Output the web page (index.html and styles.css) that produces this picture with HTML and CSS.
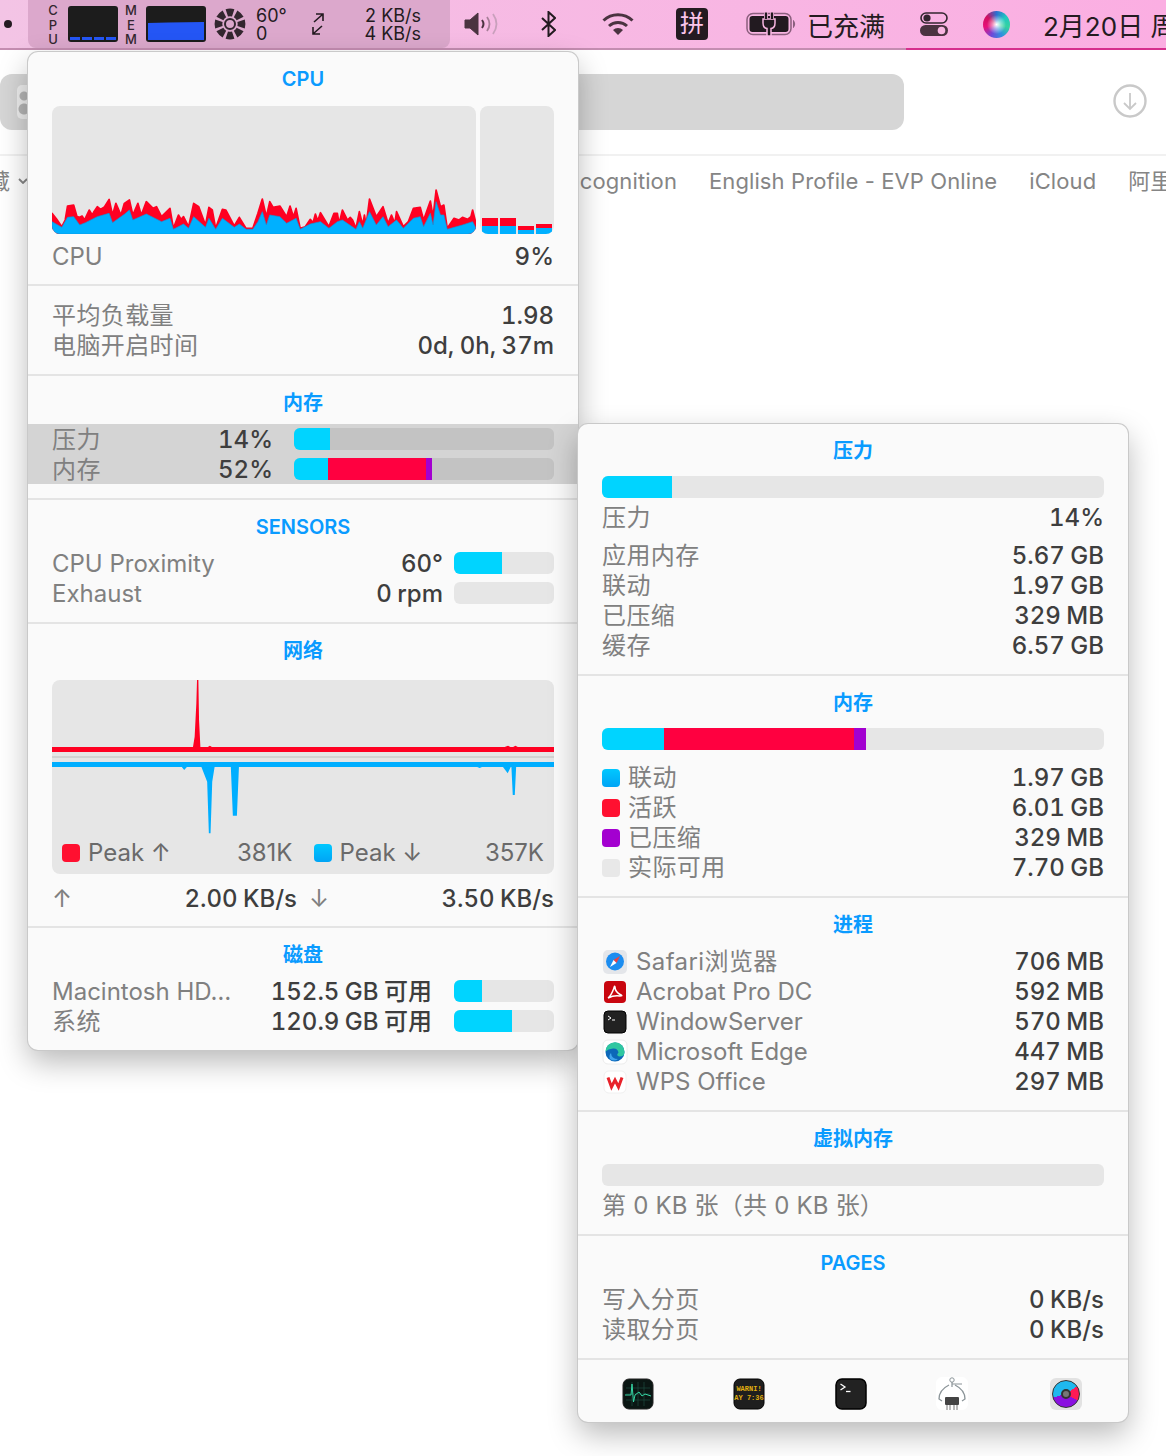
FILE: index.html
```html
<!DOCTYPE html>
<html lang="en">
<head>
    <meta charset="UTF-8">
    <meta name="viewport" content="width=device-width, initial-scale=1.0">
    <title>Stats menu</title>
    <link rel="stylesheet" href="styles.css">
</head>
<body>
    <!-- menu bar -->
    <header class="menubar">
        <span class="dot"></span>
        <div class="stats">
            <div class="letters">CPU</div>
            <div class="mini mini-cpu"><i></i><i></i><i></i><i></i></div>
            <div class="letters letters-mem">MEM</div>
            <div class="mini mini-mem">
                <svg width="56" height="18" viewBox="0 0 56 18"><polygon points="0,1 20,0.500 56,0 56,18 0,18" fill="#2456f5"/></svg>
            </div>
            <svg class="fan" width="32" height="32" viewBox="0 0 32 32">
                <defs><path id="blade" d="M14 8.600 L11.600 1.200 Q16 0 20.400 1.200 L18 8.600 Q16 8 14 8.600z" fill="#33262f"/></defs>
                <use href="#blade"/>
                <use href="#blade" transform="rotate(45 16 16)"/>
                <use href="#blade" transform="rotate(90 16 16)"/>
                <use href="#blade" transform="rotate(135 16 16)"/>
                <use href="#blade" transform="rotate(180 16 16)"/>
                <use href="#blade" transform="rotate(225 16 16)"/>
                <use href="#blade" transform="rotate(270 16 16)"/>
                <use href="#blade" transform="rotate(315 16 16)"/>
                <circle cx="16" cy="16" r="5" fill="none" stroke="#33262f" stroke-width="2"/>
            </svg>
            <div class="two-line temps"><span>60°</span><span>0</span></div>
            <svg class="net-arrows" width="12" height="22" viewBox="0 0 12 22" fill="none" stroke="#231a20" stroke-width="1.600">
                <path d="M2 9 L10.500 1.500 M4 1 H11 V8"/>
                <path d="M10 13 L1.500 20.500 M8 21 H1 V14"/>
            </svg>
            <div class="two-line speeds"><span>2 KB/s</span><span>4 KB/s</span></div>
        </div>
        <svg class="m-speaker" width="36" height="24" viewBox="0 0 36 24" fill="none">
            <path d="M1 8 H6 L14 1 V23 L6 16 H1z" fill="#4a3340" stroke="#4a3340" stroke-linejoin="round"/>
            <path d="M18 8 Q21 12 18 16" stroke="#4a3340" stroke-width="2"/>
            <path d="M23 5 Q28 12 23 19" stroke="#a77f98" stroke-width="1.800"/>
            <path d="M29 2 Q36 12 29 22" stroke="#c9a0bc" stroke-width="1.800"/>
        </svg>
        <svg class="m-bt" width="15" height="26" viewBox="0 0 15 26" fill="none" stroke="#231a20" stroke-width="2">
            <polyline points="1,7 14,19 7.500,25 7.500,1 14,7 1,19"/>
        </svg>
        <svg class="m-wifi" width="32" height="24" viewBox="0 0 32 24" fill="none" stroke="#4a3340" stroke-width="3">
            <path d="M1.500 8.500 A21 21 0 0 1 30.500 8.500"/>
            <path d="M7 14 A13.500 13.500 0 0 1 25 14"/>
            <path d="M11 18 A7 7 0 0 1 21 18 L16 23z" fill="#4a3340" stroke="none"/>
        </svg>
        <span class="m-pin">拼</span>
        <svg class="m-batt" width="51" height="24" viewBox="0 0 51 24" fill="none">
            <rect x="1" y="1.500" width="44" height="21" rx="6" stroke="#8b5f7e" stroke-width="1.500"/>
            <path d="M47.500 8.500 Q50 12 47.500 15.500z" fill="#8b5f7e" stroke="#8b5f7e"/>
            <rect x="3.500" y="4" width="39" height="16" rx="3" fill="#221a20"/>
            <path d="M17 7 H29 V11 Q29 16 25 16.500 V24 H21 V16.500 Q17 16 17 11z" fill="#221a20" stroke="#f8b6e1" stroke-width="1.500"/>
            <path d="M20 0 V7 M26 0 V7" stroke="#f8b6e1" stroke-width="4"/>
            <path d="M20 0.500 V7 M26 0.500 V7" stroke="#221a20" stroke-width="2.400"/>
        </svg>
        <span class="m-text">已充满</span>
        <svg class="m-cc" width="28" height="24" viewBox="0 0 28 24">
            <rect x="1" y="1" width="26" height="10" rx="5" fill="none" stroke="#33262f" stroke-width="1.600"/>
            <circle cx="7" cy="6" r="3.600" fill="#33262f"/>
            <rect x="0" y="13" width="28" height="11" rx="5.500" fill="#4a3340"/>
            <circle cx="21.500" cy="18.500" r="3.800" fill="#f8b6e1"/>
        </svg>
        <span class="m-siri"></span>
        <span class="m-date">2月20日 周</span>
    </header>

    <!-- browser behind the popups -->
    <div class="toolbar">
        <div class="address">
            <span class="addr-icon"></span>
        </div>
        <svg class="download" width="34" height="34" viewBox="0 0 34 34" fill="none" stroke="#c9c9c9" stroke-width="2.400">
            <circle cx="17" cy="17" r="15.500"/>
            <path d="M17 9 V25 M11 19 L17 25 L23 19" stroke-width="1.800"/>
        </svg>
    </div>
    <nav class="bookmarks">
        <span class="bm-first">
            <span>收藏</span>
            <svg width="10" height="6" viewBox="0 0 10 6" fill="none" stroke="#858585" stroke-width="1.800"><path d="M1 1 L5 5 L9 1"/></svg>
        </span>
        <span class="bm-hidden">Speech Recognition</span>
        <span>English Profile - EVP Online</span>
        <span>iCloud</span>
        <span>阿里云</span>
    </nav>

    <!-- left popup -->
    <div class="panel panel-left">
        <section class="section">
            <h3>CPU</h3>
            <div class="cpu-charts">
                <div class="chart cpu-history">
                    <svg width="424" height="128" viewBox="36 18 1254 384" preserveAspectRatio="none">
                        <polygon fill="#ff0022" stroke="#ff0022" stroke-width="5" stroke-linejoin="round" points="36,402 36,340 50,358 65,380 75,360 82,318 100,315 110,350 118,352 125,348 132,360 146,330 155,345 160,335 170,320 180,328 190,322 205,298 215,345 225,310 240,345 250,310 265,300 275,345 290,310 300,345 315,305 335,325 345,320 360,350 385,325 395,385 410,345 418,358 425,350 440,380 455,310 470,320 490,375 500,322 510,330 520,385 540,328 550,330 575,378 590,352 610,385 630,385 645,340 658,297 670,350 680,305 690,322 710,318 730,350 740,318 750,350 758,325 770,385 785,380 800,358 808,368 815,342 822,362 830,338 855,380 870,340 880,340 885,370 895,330 910,360 918,352 925,360 935,385 945,335 955,375 960,345 965,375 975,297 995,350 1015,320 1030,370 1040,345 1050,370 1055,335 1075,380 1090,365 1105,325 1125,322 1135,360 1155,303 1163,350 1172,270 1185,320 1195,315 1205,385 1225,355 1240,360 1250,352 1265,358 1275,350 1280,330 1290,370 1290,402"/>
                        <polygon fill="#00b0ff" stroke="#0c98e0" stroke-width="2" points="36,402 36,365 65,382 82,352 100,350 118,375 135,368 170,350 205,340 215,368 250,343 265,330 275,360 315,342 360,365 385,355 395,388 425,372 440,385 455,350 490,382 500,355 520,388 540,355 575,382 590,372 610,388 630,388 645,365 658,335 670,375 680,345 710,350 730,370 758,355 770,388 800,372 830,365 855,385 880,365 895,360 935,388 945,365 955,385 975,335 995,375 1015,350 1030,380 1055,360 1075,385 1105,355 1125,350 1135,380 1155,340 1163,375 1172,305 1185,345 1195,345 1205,388 1250,375 1280,365 1290,385 1290,402"/>
                    </svg>
                </div>
                <div class="chart cpu-cores">
                    <div class="core"><i class="seg-red core-h8"></i><i class="seg-blue core-h8"></i></div>
                    <div class="core"><i class="seg-red core-h8"></i><i class="seg-blue core-h8"></i></div>
                    <div class="core"><i class="seg-red core-h4"></i><i class="seg-blue core-h4"></i></div>
                    <div class="core"><i class="seg-red core-h4"></i><i class="seg-blue core-h6"></i></div>
                </div>
            </div>
            <div class="row row-after-chart"><span class="label">CPU</span><span class="value">9%</span></div>
        </section>

        <section class="section section-plain section-roomy">
            <div class="row"><span class="label zh">平均负载量</span><span class="value">1.98</span></div>
            <div class="row"><span class="label zh">电脑开启时间</span><span class="value">0d, 0h, 37m</span></div>
        </section>

        <section class="section section-roomy">
            <h3>内存</h3>
            <div class="highlight">
                <div class="row">
                    <span class="label zh">压力</span><span class="value">14%</span>
                    <div class="bar bar-wide"><i class="fill-cyan" style="width:36px"></i></div>
                </div>
                <div class="row">
                    <span class="label zh">内存</span><span class="value">52%</span>
                    <div class="bar bar-wide"><i class="fill-cyan" style="width:34px"></i><i class="fill-red" style="width:98px"></i><i class="fill-purple" style="width:6px"></i></div>
                </div>
            </div>
        </section>

        <section class="section section-roomy">
            <h3>SENSORS</h3>
            <div class="row">
                <span class="label">CPU Proximity</span><span class="value">60°</span>
                <div class="bar bar-small"><i class="fill-cyan" style="width:48px"></i></div>
            </div>
            <div class="row">
                <span class="label">Exhaust</span><span class="value">0 rpm</span>
                <div class="bar bar-small"></div>
            </div>
        </section>

        <section class="section">
            <h3 class="title-chart">网络</h3>
            <div class="chart net-chart">
                <svg width="502" height="194" viewBox="36 30 1485 582" preserveAspectRatio="none">
                    <rect x="36" y="258" width="1485" height="6" fill="#d2d2d2"/>
                    <polygon fill="#ff0022" points="36,231 453,231 458,200 463,100 465,30 469,30 471,150 475,231 497,231 503,227 509,231 1375,231 1385,227 1392,231 1400,231 1407,227 1414,231 1521,231 1521,246 36,246"/>
                    <polygon fill="#00aeff" points="36,276 1521,276 1521,291 1409,291 1405,375 1399,375 1395,291 1393,291 1384,310 1370,291 1308,291 1301,294 1294,291 589,291 583,437 571,437 565,291 517,291 510,335 505,490 500,490 495,335 478,291 435,291 427,300 420,291 36,291"/>
                </svg>
                <div class="net-legend">
                    <div class="legend-half"><i class="swatch swatch-red"></i><span class="legend-name">Peak ↑</span><span>381K</span></div>
                    <div class="legend-half"><i class="swatch swatch-blue"></i><span class="legend-name">Peak ↓</span><span>357K</span></div>
                </div>
            </div>
            <div class="net-speed">
                <div class="speed-half"><span class="label">↑</span><span class="value">2.00 KB/s</span></div>
                <div class="speed-half"><span class="label">↓</span><span class="value">3.50 KB/s</span></div>
            </div>
        </section>

        <section class="section">
            <h3>磁盘</h3>
            <div class="row">
                <span class="label">Macintosh HD…</span><span class="value">152.5 GB 可用</span>
                <div class="bar bar-small bar-disk"><i class="fill-cyan" style="width:28px"></i></div>
            </div>
            <div class="row">
                <span class="label zh">系统</span><span class="value">120.9 GB 可用</span>
                <div class="bar bar-small bar-disk"><i class="fill-cyan" style="width:58px"></i></div>
            </div>
        </section>
    </div>

    <!-- right popup -->
    <div class="panel panel-right">
        <section class="section">
            <h3>压力</h3>
            <div class="bar bar-full"><i class="fill-cyan" style="width:70px"></i></div>
            <div class="row row-after-bar"><span class="label zh">压力</span><span class="value">14%</span></div>
            <div class="group-gap">
                <div class="row"><span class="label zh">应用内存</span><span class="value">5.67 GB</span></div>
                <div class="row"><span class="label zh">联动</span><span class="value">1.97 GB</span></div>
                <div class="row"><span class="label zh">已压缩</span><span class="value">329 MB</span></div>
                <div class="row"><span class="label zh">缓存</span><span class="value">6.57 GB</span></div>
            </div>
        </section>

        <section class="section">
            <h3>内存</h3>
            <div class="bar bar-full"><i class="fill-cyan" style="width:62px"></i><i class="fill-red" style="width:190px"></i><i class="fill-purple" style="width:12px"></i></div>
            <div class="legend-rows">
                <div class="row"><i class="swatch swatch-blue"></i><span class="label zh">联动</span><span class="value">1.97 GB</span></div>
                <div class="row"><i class="swatch swatch-red"></i><span class="label zh">活跃</span><span class="value">6.01 GB</span></div>
                <div class="row"><i class="swatch swatch-purple"></i><span class="label zh">已压缩</span><span class="value">329 MB</span></div>
                <div class="row"><i class="swatch swatch-grey"></i><span class="label zh">实际可用</span><span class="value">7.70 GB</span></div>
            </div>
        </section>

        <section class="section">
            <h3>进程</h3>
            <div class="proc-rows">
                <div class="row">
                    <svg class="proc-icon" width="26" height="26" viewBox="0 0 26 26">
                        <rect x="1" y="1" width="24" height="24" rx="5" fill="#e4e6ea"/>
                        <circle cx="13" cy="12.500" r="9" fill="#1c8df0"/>
                        <polygon points="18,7 14.500,14 11.500,11" fill="#f04040"/>
                        <polygon points="8,18 14.500,14 11.500,11" fill="#fff"/>
                    </svg>
                    <span class="label zh">Safari浏览器</span><span class="value">706 MB</span>
                </div>
                <div class="row">
                    <svg class="proc-icon" width="26" height="26" viewBox="0 0 26 26">
                        <rect x="2" y="2" width="22" height="22" rx="4" fill="#c9060f"/>
                        <path d="M6 19 Q9 17 12 9 Q12.500 6 13 8 Q13 13 19 16 Q21 17 18 17 Q12 16 6 19z" fill="none" stroke="#fff" stroke-width="1.500"/>
                    </svg>
                    <span class="label">Acrobat Pro DC</span><span class="value">592 MB</span>
                </div>
                <div class="row">
                    <svg class="proc-icon" width="26" height="26" viewBox="0 0 26 26">
                        <rect x="2" y="2" width="22" height="22" rx="4" fill="#222" stroke="#000"/>
                        <path d="M6 7 L9 9 L6 11" fill="none" stroke="#fff" stroke-width="1"/>
                        <path d="M10 11 H13" stroke="#fff"/>
                    </svg>
                    <span class="label">WindowServer</span><span class="value">570 MB</span>
                </div>
                <div class="row">
                    <svg class="proc-icon" width="26" height="26" viewBox="0 0 26 26">
                        <rect x="1" y="1" width="24" height="24" rx="5" fill="#fff" stroke="#ececec"/>
                        <circle cx="13" cy="13" r="9.500" fill="#0c67b8"/>
                        <path d="M3.500 12.500 A9.500 9.500 0 0 1 22.500 13 Q22.500 17.500 17.500 17.500 Q13.500 16.500 16.500 13.500 Q15.500 9 11 9.500 Q6 10 3.500 12.500z" fill="#2fc7a0"/>
                        <path d="M9 14 Q9.500 20 16 20 Q12 23 8 20 Q6.500 16.500 9 14z" fill="#41a5ee"/>
                    </svg>
                    <span class="label">Microsoft Edge</span><span class="value">447 MB</span>
                </div>
                <div class="row">
                    <svg class="proc-icon" width="26" height="26" viewBox="0 0 26 26">
                        <rect x="2" y="2" width="22" height="22" rx="5" fill="#fff" stroke="#f0f0f0"/>
                        <polyline points="6,8.500 9.500,18 13,11 16.500,18 20,8.500" fill="none" stroke="#e8222a" stroke-width="3"/>
                    </svg>
                    <span class="label">WPS Office</span><span class="value">297 MB</span>
                </div>
            </div>
        </section>

        <section class="section">
            <h3>虚拟内存</h3>
            <div class="bar bar-full"></div>
            <div class="row row-after-bar"><span class="label label-spaced">第 0 KB 张（共 0 KB 张）</span></div>
        </section>

        <section class="section">
            <h3>PAGES</h3>
            <div class="proc-rows">
                <div class="row"><span class="label zh">写入分页</span><span class="value">0 KB/s</span></div>
                <div class="row"><span class="label zh">读取分页</span><span class="value">0 KB/s</span></div>
            </div>
        </section>

        <footer class="panel-foot">
            <svg class="foot-icon" width="32" height="32" viewBox="0 0 32 32">
                <rect x="1" y="1" width="30" height="30" rx="6" fill="#0a1613" stroke="#222"/>
                <path d="M4 10 H28 M4 16 H28 M4 22 H28 M10 4 V28 M16 4 V28 M22 4 V28" stroke="#1c4a40" stroke-width="0.700"/>
                <polyline points="3,17 9,17 10,6 11.500,24 13,17 17,14 20,18 23,16 29,18" fill="none" stroke="#35d6a4" stroke-width="1"/>
            </svg>
            <svg class="foot-icon" width="32" height="32" viewBox="0 0 32 32">
                <rect x="1" y="1" width="30" height="30" rx="6" fill="#1e1e1e" stroke="#000"/>
                <text x="16" y="13" class="console-text">WARNI!</text>
                <text x="16" y="22" class="console-text">AY 7:36</text>
            </svg>
            <svg class="foot-icon" width="32" height="32" viewBox="0 0 32 32">
                <rect x="1" y="1" width="30" height="30" rx="6" fill="#222" stroke="#000" stroke-width="1.500"/>
                <path d="M5.500 6 L10 9 L5.500 12" fill="none" stroke="#fff" stroke-width="1.300"/>
                <path d="M11 13.500 H15.500" stroke="#fff" stroke-width="1.300"/>
            </svg>
            <svg class="foot-icon" width="32" height="34" viewBox="0 0 32 34" fill="none">
                <rect width="32" height="33" rx="6" fill="#fff"/>
                <circle cx="16" cy="3" r="2.200" stroke="#8b9498"/>
                <path d="M16 5 V10 M16 7 H26" stroke="#8b9498" stroke-width="1.200"/>
                <path d="M13 8 Q3 13 3 22 L6 24 M19 8 Q29 13 29 22 L26 24" stroke="#8b9498" stroke-width="1.300"/>
                <rect x="9" y="20" width="14" height="8" rx="1" fill="#444"/>
                <path d="M11 28 V33 M14 28 V33 M18 28 V33 M21 28 V33" stroke="#777"/>
            </svg>
            <span class="gauge-tile"><span class="gauge"><i></i></span></span>
        </footer>
    </div>
</body>
</html>
```
FILE: styles.css
```css
* { box-sizing: border-box; }
body {
    margin: 0;
    height: 1456px;
    position: relative;
    overflow: hidden;
    background: #fff;
    font-family: Inter, "Noto Sans CJK SC", sans-serif;
}

/* menu bar */
.menubar {
    height: 50px;
    display: flex;
    align-items: center;
    overflow: hidden;
    white-space: nowrap;
    color: #241b21;
    background: linear-gradient(to right, #f3c4e5, #fbaee2);
    border-bottom: 2px solid;
    border-image: linear-gradient(to right, #c48db1 905px, #d62f8d 905px) 1;
}
.dot { width: 8px; height: 8px; margin-left: 4px; border-radius: 50%; background: #241b21; flex: none; }
.stats {
    width: 422px;
    height: 48px;
    margin-left: 16px;
    padding: 0 29px 0 20px;
    flex: none;
    display: flex;
    align-items: center;
    background: #dca8cc;
    border-radius: 0 0 8px 8px;
}
.letters {
    width: 10px;
    writing-mode: vertical-rl;
    text-orientation: upright;
    font-size: 13px;
    font-weight: 500;
    line-height: 10px;
    letter-spacing: -1.500px;
    color: #33262f;
}
.letters-mem { margin-left: 8px; }
.mini { height: 36px; background: #1c1c1c; border-radius: 3px; margin-left: 10px; display: flex; align-items: flex-end; padding: 2px; }
.mini-cpu { width: 50px; gap: 2px; }
.mini-cpu i { flex: 1; height: 3px; background: #2456f5; }
.mini-mem { width: 60px; }
.mini-mem svg { display: block; }
.fan { margin-left: 8px; flex: none; }
.two-line { display: flex; flex-direction: column; padding-top: 2px; font-size: 18px; line-height: 18px; }
.temps { margin-left: 10px; width: 40px; }
.net-arrows { margin-left: 16px; flex: none; }
.speeds { margin-left: auto; align-items: flex-end; }
.m-speaker { margin-left: 14px; flex: none; }
.m-bt { margin-left: 41px; flex: none; }
.m-wifi { margin-left: 46px; flex: none; }
.m-pin {
    width: 32px;
    height: 32px;
    margin-left: 42px;
    flex: none;
    background: #241b21;
    color: #fbc5ea;
    border-radius: 4px;
    font-size: 24px;
    line-height: 31px;
    text-align: center;
}
.m-batt { margin-left: 38px; flex: none; }
.m-text { margin-left: 10px; font-size: 26px; flex: none; }
.m-cc { margin-left: 35px; flex: none; }
.m-siri {
    width: 27px;
    height: 27px;
    margin-left: 35px;
    flex: none;
    border-radius: 50%;
    background: radial-gradient(circle at 50% 50%, #fff 0, rgba(255,255,255,.5) 22%, transparent 50%),
        conic-gradient(#2d6fd0, #20c8c0, #35d2a0, #2f8fe0, #7048d8, #e8107a, #d01060, #2d6fd0);
}
.m-date { margin-left: 33px; font-size: 26px; flex: none; }

/* browser window behind */
.toolbar {
    height: 106px;
    display: flex;
    align-items: flex-start;
    padding-top: 24px;
    border-bottom: 2px solid #f1f1f1;
}
.address {
    width: 904px;
    height: 56px;
    padding: 11px 0 0 17px;
    background: #d6d6d6;
    border-radius: 12px;
}
.addr-icon {
    display: block;
    width: 30px;
    height: 34px;
    border-radius: 5px;
    background: radial-gradient(circle at 7px 11px, #b5b5b5 4px, transparent 5px),
        radial-gradient(circle at 7px 24px, #b5b5b5 5px, transparent 6px),
        #ededed;
}
.download { margin: 10px 0 0 209px; }
.bookmarks {
    display: flex;
    gap: 32px;
    padding-top: 10px;
    font-size: 22px;
    line-height: 30px;
    letter-spacing: .1px;
    color: #858585;
    white-space: nowrap;
}
.bm-first { width: 30px; flex: none; overflow: hidden; display: flex; justify-content: flex-end; align-items: center; gap: 8px; padding-right: 2px; }
.bm-first span, .bm-first svg { flex: none; }
.bm-hidden { width: 615px; flex: none; overflow: hidden; text-align: right; }

/* popups */
.panel {
    position: absolute;
    width: 550px;
    background: #fafafa;
    border-radius: 10px;
    box-shadow: 0 0 0 1px #c9c9c9, 0 12px 30px rgba(0, 0, 0, .28);
}
.panel-left { left: 28px; top: 52px; height: 998px; }
.panel-right { left: 578px; top: 424px; height: 998px; }
.section { padding: 0 24px 13px; border-bottom: 2px solid #e4e4e4; }
.section:last-child { border-bottom: 0; }
.section-roomy { padding-bottom: 14px; }
.section-plain { padding-top: 14px; }
h3 {
    margin: 0;
    height: 48px;
    padding-top: 14px;
    font-size: 20px;
    line-height: 26px;
    font-weight: 600;
    text-align: center;
    color: #0a9bff;
}
.title-chart { height: 56px; }
.row { height: 30px; display: flex; align-items: center; font-size: 24px; line-height: 30px; }
.panel-left .row .label, .panel-left .row .value { padding-top: 2px; }
.label { flex: 1; color: #808080; white-space: nowrap; }
.zh { letter-spacing: .4px; }
.value { color: #3e3e3e; font-weight: 500; white-space: nowrap; font-variant-numeric: tabular-nums; word-spacing: -1px; }
.label-spaced { letter-spacing: .2px; }

.chart { background: #e6e6e6; border-radius: 8px; overflow: hidden; }
.chart svg { display: block; }
.cpu-charts { display: flex; gap: 4px; height: 128px; margin-top: 6px; }
.cpu-history { width: 424px; }
.cpu-cores { width: 74px; padding: 0 2px; display: flex; gap: 2px; align-items: flex-end; }
.core { width: 16px; display: flex; flex-direction: column; }
.seg-red { background: #ff0022; }
.seg-blue { background: #00b0ff; }
.core-h4 { height: 4px; }
.core-h6 { height: 6px; }
.core-h8 { height: 8px; }
.row-after-chart { margin-top: 7px; }

.highlight { margin: 0 -24px; padding: 0 24px; background: #d4d4d4; }
.highlight .bar { background: #c3c3c3; }

.bar { height: 22px; display: flex; flex: none; overflow: hidden; background: #e6e6e6; border-radius: 6px; }
.bar i { display: block; height: 100%; }
.bar-wide { width: 260px; margin-left: 21px; }
.bar-small { width: 100px; margin-left: 11px; }
.bar-disk { margin-left: 22px; }
.bar-full { width: 502px; margin-top: 4px; }
.fill-cyan { background: #00d4ff; }
.fill-red { background: #ff0040; }
.fill-purple { background: #a300d0; }
.row-after-bar { margin-top: 5px; }
.group-gap { margin-top: 8px; }

.net-chart { position: relative; height: 194px; }
.net-legend {
    position: absolute;
    left: 10px;
    right: 10px;
    bottom: 6px;
    display: flex;
    gap: 21px;
    font-size: 24px;
    line-height: 30px;
    color: #6a6a6a;
}
.legend-half { flex: 1; display: flex; align-items: center; }
.legend-name { flex: 1; }
.swatch { width: 18px; height: 18px; flex: none; margin-right: 8px; border-radius: 4px; }
.swatch-red { background: #ff1030; }
.swatch-blue { background: linear-gradient(#00c8ff, #00a4f5); }
.swatch-purple { background: #a300d0; }
.swatch-grey { background: #e8e8e8; }
.net-speed { display: flex; gap: 12px; height: 29px; margin-top: 10px; font-size: 24px; line-height: 30px; }
.speed-half { flex: 1; display: flex; }

.legend-rows { margin-top: 13px; }
.proc-rows { margin-top: 1px; }
.proc-icon { flex: none; margin-right: 8px; }
.panel-foot { height: 62px; display: flex; align-items: center; padding: 6px 0 0 44px; }
.foot-icon { flex: none; }
.foot-icon:nth-child(2) { margin-left: 79px; }
.foot-icon:nth-child(3) { margin-left: 70px; }
.foot-icon:nth-child(4) { margin-left: 69px; }
.console-text { font-family: "Liberation Mono", monospace; font-size: 7px; font-weight: 700; fill: #e0b010; text-anchor: middle; }
.gauge-tile {
    width: 32px;
    height: 32px;
    margin-left: 82px;
    padding: 2px;
    flex: none;
    background: #e2e2e2;
    border-radius: 6px;
}
.gauge {
    display: flex;
    align-items: center;
    justify-content: center;
    width: 28px;
    height: 28px;
    border-radius: 50%;
    border: 1px solid #333;
    background: conic-gradient(from 55deg, #ff1a55 0 65deg, #8a10e0 65deg 200deg, #1fb8ee 200deg 360deg);
}
.gauge i { width: 10px; height: 10px; border-radius: 50%; background: #777; border: 2px solid #333; }
```
